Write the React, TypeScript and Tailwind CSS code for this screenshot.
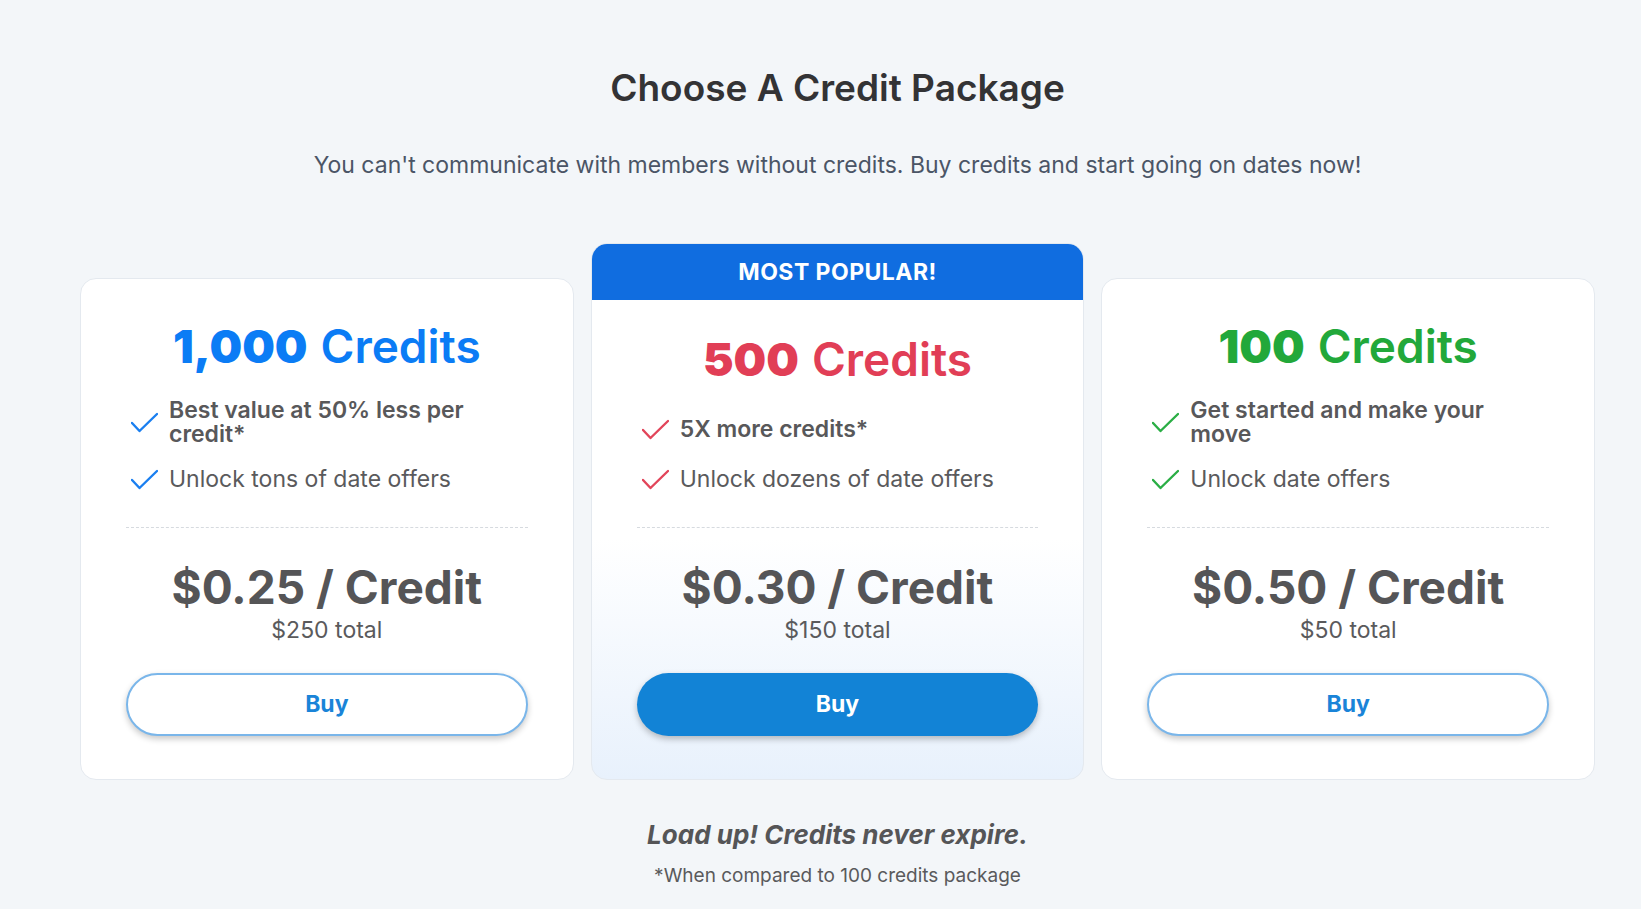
const packages = [
  {
    amount: "1,000",
    color: "text-[#0b7cf5]",
    check: "#1a7ff0",
    features: ["Best value at 50% less per credit*", "Unlock tons of date offers"],
    price: "$0.25",
    total: "$250 total",
    popular: false,
  },
  {
    amount: "500",
    color: "text-[#e13e56]",
    check: "#e2455a",
    features: ["5X more credits*", "Unlock dozens of date offers"],
    price: "$0.30",
    total: "$150 total",
    popular: true,
  },
  {
    amount: "100",
    color: "text-[#22a83a]",
    check: "#2aae45",
    features: ["Get started and make your move", "Unlock date offers"],
    price: "$0.50",
    total: "$50 total",
    popular: false,
  },
];

function CheckIcon({ color }: { color: string }) {
  return (
    <svg width="27" height="21" viewBox="0 0 27 21" fill="none" className="shrink-0">
      <path d="M1 11 L8.5 19 L26 2" stroke={color} strokeWidth="2.4" strokeLinecap="round" strokeLinejoin="round" />
    </svg>
  );
}

function Card({ pkg }: { pkg: (typeof packages)[number] }) {
  return (
    <div
      className={
        pkg.popular
          ? "flex-1 flex flex-col rounded-[16px] border border-[#e4e9ef] bg-gradient-to-b from-white from-[55%] to-[#e8f1fc] overflow-hidden"
          : "flex-1 flex flex-col rounded-[16px] border border-[#e4e9ef] bg-white"
      }
    >
      {pkg.popular && (
        <div className="h-[56px] bg-[#106de0] rounded-t-[12px] flex items-center justify-center text-white text-[23px] font-bold tracking-[0.02em]">
          MOST POPULAR!
        </div>
      )}
      <div className={pkg.popular ? "pt-[36px] px-[45px]" : "pt-[44px] px-[45px]"}>
        <h2 className={`text-center text-[46px] leading-none ${pkg.color}`}>
          <span className="font-black">{pkg.amount}</span> <span className="font-semibold">Credits</span>
        </h2>
        <ul className={pkg.popular ? "mt-[35px] pl-[5px]" : "mt-[29px] pl-[5px]"}>
          <li className={pkg.popular ? "flex items-center gap-[11px] h-[24px]" : "flex items-center gap-[11px] h-[48px]"}>
            <CheckIcon color={pkg.check} />
            <span className="max-w-[330px] text-[23px] leading-[24px] font-semibold text-[#58585a]">{pkg.features[0]}</span>
          </li>
          <li className={pkg.popular ? "mt-[26px] flex items-center gap-[11px] h-[24px]" : "mt-[21px] flex items-center gap-[11px] h-[24px]"}>
            <CheckIcon color={pkg.check} />
            <span className="text-[23px] leading-[24px] text-[#5a5a5c]">{pkg.features[1]}</span>
          </li>
        </ul>
        <div className="mt-[36px] border-t border-dashed border-[#d6dadf]" />
        <div className="mt-[36px] text-center text-[46px] leading-none font-bold text-[#555557]">
          {pkg.price} / Credit
        </div>
        <div className="mt-[9px] text-center text-[23px] leading-none text-[#5a5a5c]">{pkg.total}</div>
        <button
          className={
            pkg.popular
              ? "mt-[31px] w-full h-[63px] rounded-full bg-[#1283d6] text-white text-[23px] font-bold shadow-[0_3px_6px_rgba(0,0,0,0.25)]"
              : "mt-[31px] w-full h-[63px] rounded-full bg-white border-2 border-[#7ab6ea] text-[#1a84d8] text-[23px] font-bold shadow-[0_3px_6px_rgba(0,0,0,0.22)]"
          }
        >
          Buy
        </button>
      </div>
      <div className="h-[43px]" />
    </div>
  );
}

export default function App() {
  return (
    <div className="min-h-screen bg-[#f3f6f9] font-['Inter',sans-serif] pl-[80px] pr-[46px]">
      <h1 className="pt-[66px] text-center text-[37px] leading-[44px] font-semibold text-[#333335]">
        Choose A Credit Package
      </h1>
      <p className="mt-[41px] text-center text-[23px] leading-[28px] text-[#4b5566]">
        You can't communicate with members without credits. Buy credits and start going on dates now!
      </p>
      <div className="mt-[64px] flex items-end gap-[17px]">
        {packages.map((p) => (
          <Card key={p.amount} pkg={p} />
        ))}
      </div>
      <div className="mt-[39px] text-center text-[26px] leading-[32px] font-bold italic text-[#555557]">
        Load up! Credits never expire.
      </div>
      <div className="mt-[13px] text-center text-[19px] leading-[24px] text-[#5a5a5c]">
        *When compared to 100 credits package
      </div>
    </div>
  );
}
